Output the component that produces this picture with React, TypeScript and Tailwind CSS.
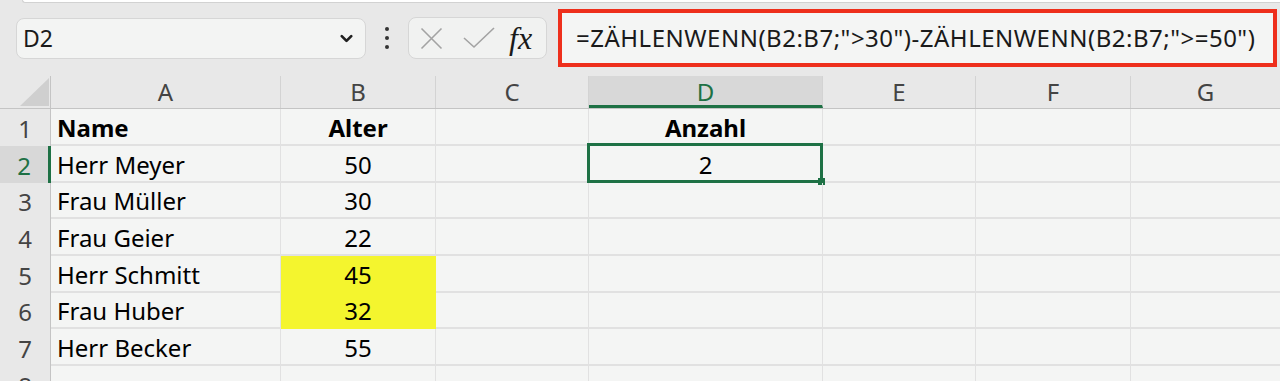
import { ChevronDown } from 'lucide-react';

interface Row {
  n: number;
  h: string;
  a?: string;
  b?: string;
  d?: string;
  bold?: boolean;
  hl?: boolean;
}

const rows: Row[] = [
  { n: 1, h: 'h-[37px]', a: 'Name', b: 'Alter', d: 'Anzahl', bold: true },
  { n: 2, h: 'h-[37px]', a: 'Herr Meyer', b: '50', d: '2' },
  { n: 3, h: 'h-[36px]', a: 'Frau Müller', b: '30' },
  { n: 4, h: 'h-[37px]', a: 'Frau Geier', b: '22' },
  { n: 5, h: 'h-[37px]', a: 'Herr Schmitt', b: '45', hl: true },
  { n: 6, h: 'h-[36px]', a: 'Frau Huber', b: '32', hl: true },
  { n: 7, h: 'h-[37px]', a: 'Herr Becker', b: '55' },
  { n: 8, h: 'h-[37px]' },
];

const Toolbar = () => (
  <div className="h-[76px] bg-[#e8e8e8]">
    {/* bottom edge of the ribbon panel above */}
    <div className="ml-[22px] h-[3px] rounded-bl-[6px] border-b border-l border-[#d2d2d2] bg-white"></div>
    <div className="flex h-[58px] items-center pl-[16px] mt-[6px]">
      {/* name box */}
      <div className="flex h-[41px] w-[350px] items-center justify-between rounded-[8px] border border-[#d6d6d6] bg-[#f3f4f3] pl-[6px] pr-[9px]">
        <span className="text-[23px] text-[#1a1a1a]">D2</span>
        <ChevronDown size={19} strokeWidth={3.4} className="text-[#1f1f1f]" />
      </div>
      <div className="ml-[19px] flex flex-col gap-[5px]">
        <span className="h-[4px] w-[4px] rounded-full bg-[#333]"></span>
        <span className="h-[4px] w-[4px] rounded-full bg-[#333]"></span>
        <span className="h-[4px] w-[4px] rounded-full bg-[#333]"></span>
      </div>
      {/* cancel / enter / fx */}
      <div className="ml-[19px] flex h-[42px] w-[139px] items-center rounded-[8px] border border-[#d6d6d6] bg-[#f1f2f1] pl-[11px]">
        <svg width="23" height="23" viewBox="0 0 23 23" fill="none" stroke="#a3a3a3" strokeWidth="1.6">
          <path d="M1.5 1.5 L21.5 21.5 M21.5 1.5 L1.5 21.5" />
        </svg>
        <svg width="32" height="22" viewBox="0 0 32 22" fill="none" stroke="#a3a3a3" strokeWidth="1.6" className="ml-[20px]">
          <path d="M1 11 L11 20 L31 1" />
        </svg>
        <span className="ml-[14px] font-['Liberation_Serif',serif] text-[32px] italic leading-none text-[#1a1a1a]">fx</span>
      </div>
      {/* formula bar with red annotation frame */}
      <div className="ml-[11px] flex h-[58px] w-[719px] items-center border-[4px] border-[#ee2f1c] bg-[#f4f5f4] pl-[14px]">
        <span className="text-[24px] tracking-[0.5px] text-[#1a1a1a]">=ZÄHLENWENN(B2:B7;"&gt;30")-ZÄHLENWENN(B2:B7;"&gt;=50")</span>
      </div>
    </div>
  </div>
);

const ColumnHeader = () => (
  <div className="flex h-[33px] border-b border-[#c4c4c4] bg-[#e8e8e8] text-[24px] text-[#444]">
    <div className="relative w-[51px] border-r border-[#c4c4c4]">
      <svg width="29" height="28" viewBox="0 0 29 28" className="absolute left-[20px] top-[2px]">
        <polygon points="29,0 29,28 0,28" fill="#cfcfcf" />
      </svg>
    </div>
    <div className="flex w-[230px] items-center justify-center border-r border-[#d3d3d3]">A</div>
    <div className="flex w-[155px] items-center justify-center border-r border-[#d3d3d3]">B</div>
    <div className="flex w-[153px] items-center justify-center border-r border-[#d3d3d3]">C</div>
    <div className="flex w-[234px] items-center justify-center border-b-[3px] border-r border-[#d3d3d3] border-b-[#1e7145] bg-[#d8d8d8] pt-[3px] text-[#1e7145]">D</div>
    <div className="flex w-[153px] items-center justify-center border-r border-[#d3d3d3]">E</div>
    <div className="flex w-[155px] items-center justify-center border-r border-[#d3d3d3]">F</div>
    <div className="flex flex-1 items-center justify-center">G</div>
  </div>
);

const SheetRow = ({ row }: { row: Row }) => {
  const selected = row.n === 2;
  return (
    <div className={`flex ${row.h} text-[24px] leading-none`}>
      <div
        className={`flex w-[51px] items-center justify-center border-r border-[#c4c4c4] pt-[2px] ${
          selected ? 'border-r-[3px] border-r-[#1e7145] bg-[#d8d8d8] text-[#1e7145]' : 'bg-[#e8e8e8] text-[#444]'
        }`}
      >
        {row.n}
      </div>
      <div className={`flex w-[230px] items-center border-b-2 border-r border-[#e1e1e1] pl-[6px] pt-[2px] text-black ${row.bold ? 'font-bold' : ''}`}>
        {row.a}
      </div>
      <div
        className={`flex w-[155px] items-center justify-center border-b-2 border-r pt-[2px] text-black ${
          row.hl ? 'border-[#f4f52e] bg-[#f4f52e]' : 'border-[#e1e1e1]'
        } ${row.bold ? 'font-bold' : ''}`}
      >
        {row.b}
      </div>
      <div className="w-[153px] border-b-2 border-r border-[#e1e1e1]"></div>
      <div className={`relative flex w-[234px] items-center justify-center border-b-2 border-r border-[#e1e1e1] pt-[2px] text-black ${row.bold ? 'font-bold' : ''}`}>
        {row.d}
        {selected && (
          <div className="absolute -left-[2px] -top-[3px] -right-[1px] -bottom-[2px] border-[3px] border-[#1e7145]">
            <span className="absolute -bottom-[5px] -right-[5px] h-[7px] w-[7px] bg-[#1e7145]"></span>
          </div>
        )}
      </div>
      <div className="w-[153px] border-b-2 border-r border-[#e1e1e1]"></div>
      <div className="w-[155px] border-b-2 border-r border-[#e1e1e1]"></div>
      <div className="flex-1 border-b-2 border-[#e1e1e1]"></div>
    </div>
  );
};

export default function App() {
  return (
    <div className="h-[381px] w-[1280px] overflow-hidden bg-[#f4f5f4] font-['Noto_Sans',sans-serif]">
      <Toolbar />
      <ColumnHeader />
      {rows.map((row) => (
        <SheetRow key={row.n} row={row} />
      ))}
    </div>
  );
}
